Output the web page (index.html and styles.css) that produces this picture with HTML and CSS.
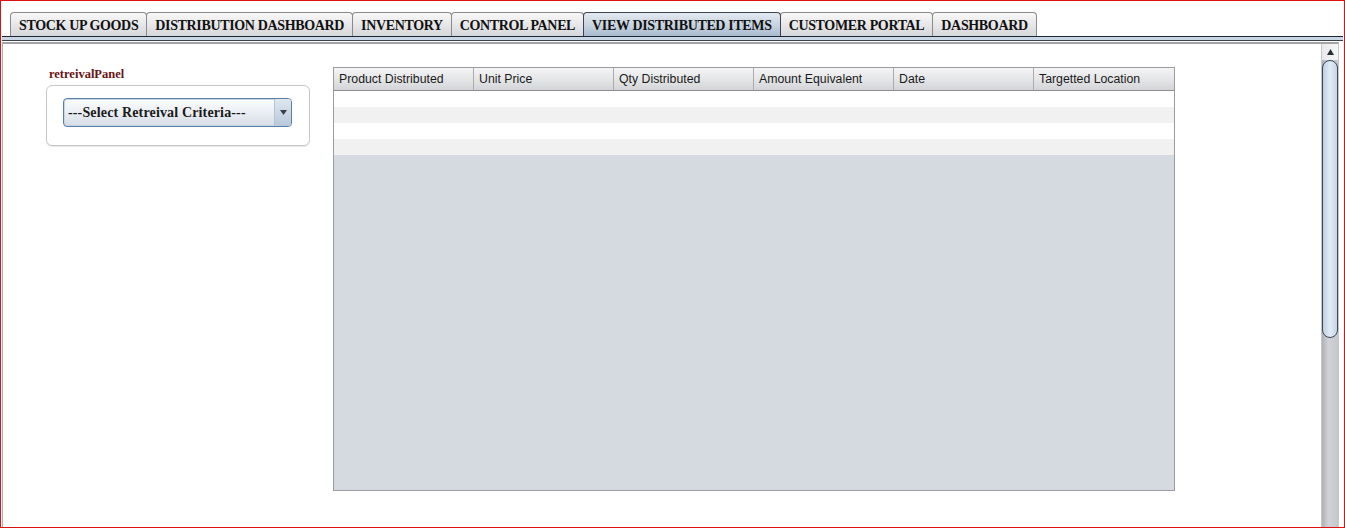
FILE: index.html
```html
<!DOCTYPE html>
<html>
<head>
<meta charset="utf-8">
<link rel="stylesheet" href="styles.css">
</head>
<body>
<div class="frame">
  <div class="tabs">
    <div class="tab">STOCK UP GOODS</div>
    <div class="tab">DISTRIBUTION DASHBOARD</div>
    <div class="tab">INVENTORY</div>
    <div class="tab">CONTROL PANEL</div>
    <div class="tab active">VIEW DISTRIBUTED ITEMS</div>
    <div class="tab">CUSTOMER PORTAL</div>
    <div class="tab">DASHBOARD</div>
  </div>
  <div class="tabline"></div>
  <div class="content">
    <div class="main">
      <div class="left">
        <div class="panel-label">retreivalPanel</div>
        <div class="panel-box">
          <div class="combo">
            <span class="combo-text">---Select Retreival Criteria---</span>
            <span class="combo-btn">
              <svg width="7" height="5" viewBox="0 0 7 5"><polygon points="0,0 7,0 3.5,5" fill="#3a3f46"/></svg>
            </span>
          </div>
        </div>
      </div>
      <div class="table">
        <div class="thead">
          <div class="th">Product Distributed</div>
          <div class="th">Unit Price</div>
          <div class="th">Qty Distributed</div>
          <div class="th">Amount Equivalent</div>
          <div class="th">Date</div>
          <div class="th">Targetted Location</div>
        </div>
        <div class="row"></div>
        <div class="row alt"></div>
        <div class="row"></div>
        <div class="row alt"></div>
      </div>
    </div>
    <div class="scrollbar">
      <div class="sb-up">
        <svg width="7" height="6" viewBox="0 0 7 6"><polygon points="0,6 7,6 3.5,0" fill="#2b2f35"/></svg>
      </div>
      <div class="sb-thumb"></div>
      <div class="sb-track"></div>
    </div>
  </div>
</div>
</body>
</html>
```

FILE: styles.css
```css
html, body {
  margin: 0;
  padding: 0;
  background: #ffffff;
}

.frame {
  width: 1345px;
  height: 528px;
  box-sizing: border-box;
  border: 1px solid #e01010;
  display: flex;
  flex-direction: column;
  background: #ffffff;
}

.tabs {
  display: flex;
  padding: 11px 0 0 9px;
  height: 24px;
  box-sizing: content-box;
}

.tab {
  height: 24px;
  box-sizing: border-box;
  padding: 4px 8px 0 8px;
  font-family: "Liberation Serif", "Times New Roman", serif;
  font-weight: bold;
  font-size: 14px;
  letter-spacing: -0.35px;
  line-height: 18px;
  color: #111111;
  border: 1px solid #8a8a8a;
  border-bottom: none;
  border-radius: 4px 4px 0 0;
  background: linear-gradient(#f8f8f8, #e4e4e6 60%, #d6d7da);
  margin-right: -1px;
  white-space: nowrap;
}

.tab.active {
  background: linear-gradient(#e3e9f0, #c3d0dd 60%, #a8bacd);
  border-color: #3b4450;
  position: relative;
  z-index: 1;
}

.tabline {
  margin: 0 1px;
  height: 3px;
  border-top: 1px solid #1c2633;
  border-bottom: 1px solid #39414d;
  background: #c9d6e6;
}

.content {
  flex: 1;
  display: flex;
  margin: 1px 5px 0 1px;
  border-top: 2px solid #a3a3a8;
  border-left: 1px solid #b0b0b4;
  border-right: 1px solid #c8c8cc;
  min-height: 0;
}

.main {
  flex: 1;
  display: flex;
  padding: 23px 0 0 43px;
}

.left {
  width: 264px;
  display: flex;
  flex-direction: column;
}

.panel-label {
  font-family: "Liberation Serif", "Times New Roman", serif;
  font-weight: bold;
  font-size: 12.5px;
  line-height: 14px;
  color: #6a1212;
  padding: 0 0 0 3px;
  height: 18px;
}

.panel-box {
  height: 61px;
  box-sizing: border-box;
  border: 1px solid #c4c6ca;
  border-radius: 6px;
  padding: 12px 17px 0 16px;
  box-shadow: 0 1px 1px #e6e6e8;
}

.combo {
  height: 29px;
  box-sizing: border-box;
  border: 1px solid #5b7ea5;
  border-radius: 4px;
  display: flex;
  align-items: center;
  background: linear-gradient(#fbfcfd, #e9edf2 55%, #d5dce5);
  box-shadow: inset 0 0 0 1px #c7d5e4;
}

.combo-text {
  flex: 1;
  font-family: "Liberation Serif", "Times New Roman", serif;
  font-weight: bold;
  font-size: 14px;
  letter-spacing: 0.15px;
  color: #1a1a1a;
  padding-left: 4px;
}

.combo-btn {
  width: 16px;
  height: 27px;
  border-left: 1px solid #b4c4d6;
  display: flex;
  align-items: center;
  justify-content: center;
  background: linear-gradient(#dfe7f0, #b8c8da);
  border-radius: 0 3px 3px 0;
}

.table {
  margin-left: 23px;
  width: 842px;
  height: 424px;
  box-sizing: border-box;
  border: 1px solid #9a9ca0;
  background: #d5d9e0;
  display: flex;
  flex-direction: column;
}

.thead {
  display: flex;
  height: 22px;
  border-bottom: 1px solid #8c8e92;
  background: linear-gradient(#f4f4f5, #e2e3e5 60%, #d3d4d7);
}

.th {
  width: 140px;
  box-sizing: border-box;
  border-right: 1px solid #a9abaf;
  font-family: "Liberation Sans", Arial, sans-serif;
  font-size: 12.3px;
  line-height: 22px;
  color: #1a1a1a;
  padding-left: 5px;
  white-space: nowrap;
}

.th:last-child {
  border-right: none;
}

.row {
  height: 16px;
  background: #ffffff;
}

.row.alt {
  background: #f1f1f2;
}

.scrollbar {
  width: 16px;
  display: flex;
  flex-direction: column;
  border-left: 1px solid #c7c7cb;
  background: linear-gradient(90deg, #aeb0b5, #d0d2d7 40%, #c5c7cc);
}

.sb-up {
  height: 16px;
  display: flex;
  align-items: center;
  justify-content: center;
  background: linear-gradient(90deg, #e8e9eb, #f6f6f7);
}

.sb-thumb {
  height: 278px;
  box-sizing: border-box;
  border: 1px solid #3b4656;
  border-radius: 10px;
  background: linear-gradient(90deg, #bccfe1, #e2ecf5 50%, #c4d5e6);
}

.sb-track {
  flex: 1;
}
```
